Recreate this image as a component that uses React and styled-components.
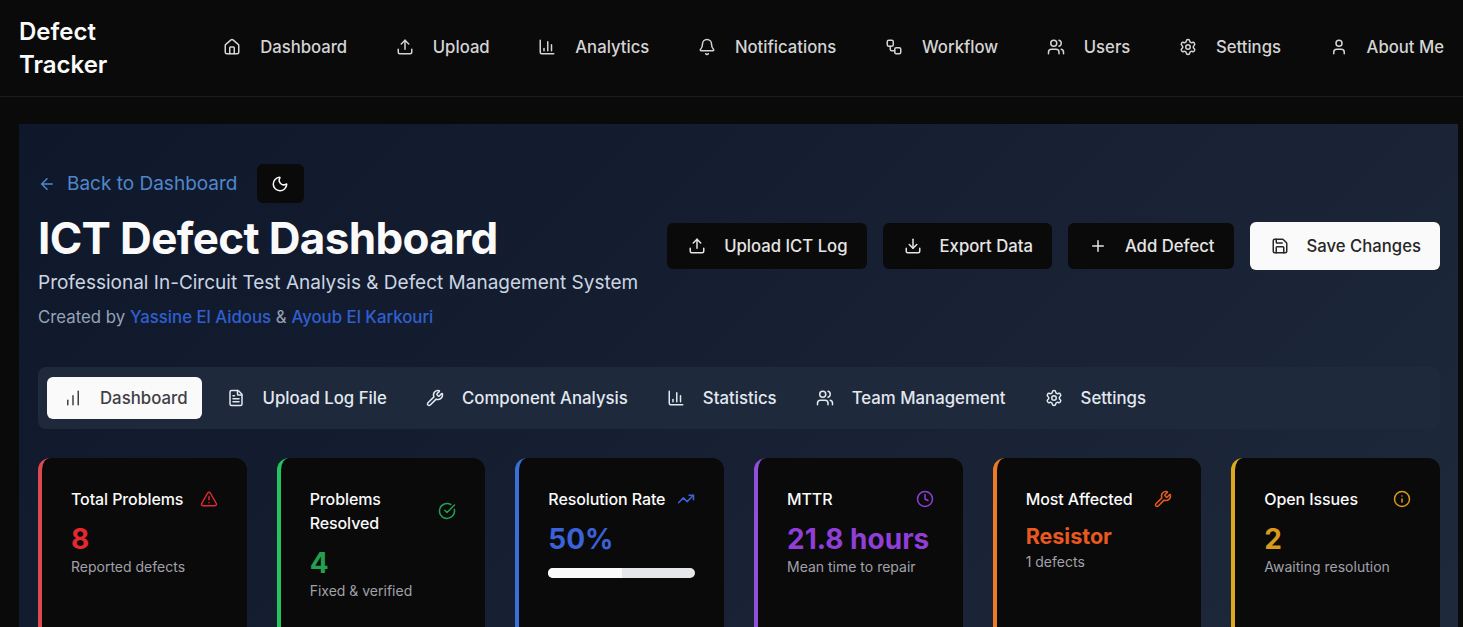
import styled, { createGlobalStyle } from "styled-components";
import {
  House, Upload, ChartColumn, Bell, Workflow, Users, Settings, User, ArrowLeft, Moon,
  Download, Plus, Save, ChartNoAxesColumnIncreasing, FileText, Wrench, TriangleAlert,
  CircleCheckBig, TrendingUp, Clock, Info,
} from "lucide-react";

const GlobalStyle = createGlobalStyle`
  html, body {
    margin: 0;
    height: 100%;
    overflow: hidden;
    background: #0a0a0a;
    font-family: Inter, "Liberation Sans", sans-serif;
  }
  * { box-sizing: border-box; }
`;

const TopBar = styled.header`
  height: 97px;
  padding: 0 19px;
  display: flex;
  align-items: center;
  justify-content: space-between;
  border-bottom: 1px solid #1c1c1c;
  background: #0a0a0a;
`;

const Logo = styled.div`
  width: 110px;
  font-size: 24px;
  line-height: 33px;
  font-weight: 600;
  color: #fafafa;
`;

const NavList = styled.nav`
  display: flex;
  align-items: center;
  gap: 48.6px;
  margin-bottom: 2px;
`;

const NavItem = styled.a`
  display: flex;
  align-items: center;
  gap: 19px;
  font-size: 16.7px;
  font-weight: 500;
  color: #d4d4d4;
`;

const Panel = styled.main`
  margin: 27px 5px 0 19px;
  height: 520px;
  padding: 40px 18px 0 19px;
  background: linear-gradient(135deg, #0f172a, #1e293b);
`;

const Header = styled.section`
  display: flex;
  align-items: center;
  justify-content: space-between;
`;

const BackRow = styled.div`
  display: flex;
  align-items: center;
  gap: 19px;
`;

const BackLink = styled.a`
  display: flex;
  align-items: center;
  gap: 11px;
  font-size: 19px;
  color: #5087cc;
`;

const ThemeButton = styled.button`
  width: 47px;
  height: 39px;
  border: 0;
  border-radius: 6px;
  background: #0a0a0a;
  color: #fafafa;
  display: flex;
  align-items: center;
  justify-content: center;
`;

const Title = styled.h1`
  margin: 8px 0 0;
  font-size: 44px;
  line-height: 54px;
  font-weight: 700;
  letter-spacing: -0.65px;
  color: #fafafa;
`;

const Subtitle = styled.p`
  margin: 4px 0 0;
  font-size: 19px;
  line-height: 28px;
  color: #cbd5e1;
`;

const Credit = styled.p`
  margin: 8px 0 0;
  font-size: 16.8px;
  line-height: 24px;
  color: #94a3b8;
`;

const Author = styled.span`
  font-weight: 500;
  color: #2f5fd0;
`;

const Actions = styled.div`
  display: flex;
  align-items: center;
  gap: 16px;
  margin-bottom: 2px;
`;

const ActionButton = styled.button`
  height: ${(props) => (props.$primary ? "48px" : "46px")};
  padding: 0 19px 0 21px;
  border: 0;
  border-radius: 6px;
  display: flex;
  align-items: center;
  gap: 18px;
  font-family: inherit;
  font-size: 16.7px;
  font-weight: 500;
  background: ${(props) => (props.$primary ? "#fafafa" : "#0a0a0a")};
  color: ${(props) => (props.$primary ? "#262626" : "#e5e5e5")};
`;

const TabBar = styled.div`
  margin-top: 38px;
  height: 62px;
  padding: 0 9px;
  display: flex;
  align-items: center;
  gap: 8px;
  border-radius: 8px;
  background: #1e293b;
`;

const Tab = styled.a`
  height: 42px;
  padding: 0 14px 0 17px;
  display: flex;
  align-items: center;
  gap: 18px;
  border-radius: 6px;
  font-size: 16.8px;
  font-weight: 500;
  background: ${(props) => (props.$active ? "#fafafa" : "transparent")};
  color: ${(props) => (props.$active ? "#3f3f46" : "#e2e8f0")};
`;

const CardGrid = styled.div`
  margin-top: 29px;
  display: grid;
  grid-template-columns: repeat(6, 1fr);
  gap: 30px;
`;

const Card = styled.article`
  height: 190px;
  padding: 29px 29px 0 29px;
  border-left: 4px solid ${(props) => props.$accent};
  border-radius: 12px;
  background: #0a0a0a;
`;

const CardHead = styled.div`
  display: flex;
  align-items: center;
  justify-content: space-between;
  gap: 8px;
  font-size: 16px;
  line-height: 24px;
  font-weight: 500;
  letter-spacing: -0.1px;
  color: #fafafa;
`;

const CardValue = styled.div`
  margin-top: 10px;
  font-size: ${(props) => (props.$small ? "21.5px" : "28px")};
  line-height: ${(props) => (props.$small ? "31px" : "36px")};
  font-weight: 700;
  white-space: nowrap;
  color: ${(props) => props.$color};
`;

const CardNote = styled.div`
  font-size: 14px;
  line-height: 20px;
  color: #a1a1aa;
`;

const Progress = styled.div`
  margin-top: 11px;
  height: 10px;
  border-radius: 5px;
  overflow: hidden;
  background: #e5e7eb;
`;

const ProgressFill = styled.div`
  height: 100%;
  background: #fafafa;
`;

const navItems = [
  [House, "Dashboard"], [Upload, "Upload"], [ChartColumn, "Analytics"], [Bell, "Notifications"],
  [Workflow, "Workflow"], [Users, "Users"], [Settings, "Settings"], [User, "About Me"],
];

const tabs = [
  [ChartNoAxesColumnIncreasing, "Dashboard"], [FileText, "Upload Log File"], [Wrench, "Component Analysis"],
  [ChartColumn, "Statistics"], [Users, "Team Management"], [Settings, "Settings"],
];

const cards = [
  { title: "Total Problems", Icon: TriangleAlert, accent: "#dc4a4f", color: "#e5282f", value: "8", note: "Reported defects" },
  { title: "Problems Resolved", Icon: CircleCheckBig, accent: "#22c55e", color: "#22a04f", value: "4", note: "Fixed & verified" },
  { title: "Resolution Rate", Icon: TrendingUp, accent: "#3b6fd8", color: "#3b62d8", value: "50%", progress: 50 },
  { title: "MTTR", Icon: Clock, accent: "#9050dc", color: "#8f3fd6", value: "21.8 hours", note: "Mean time to repair" },
  { title: "Most Affected", Icon: Wrench, accent: "#f07a24", color: "#e8591f", value: "Resistor", note: "1 defects", small: true },
  { title: "Open Issues", Icon: Info, accent: "#e0a81e", color: "#d99a1c", value: "2", note: "Awaiting resolution" },
];

export default function App() {
  return (
    <>
      <GlobalStyle />
      <TopBar>
        <Logo>Defect Tracker</Logo>
        <NavList>
          {navItems.map(([Icon, label]) => (
            <NavItem key={label}><Icon size={18} />{label}</NavItem>
          ))}
        </NavList>
      </TopBar>
      <Panel>
        <Header>
          <div>
            <BackRow>
              <BackLink><ArrowLeft size={18} />Back to Dashboard</BackLink>
              <ThemeButton><Moon size={18} /></ThemeButton>
            </BackRow>
            <Title>ICT Defect Dashboard</Title>
            <Subtitle>Professional In-Circuit Test Analysis &amp; Defect Management System</Subtitle>
            <Credit>Created by <Author>Yassine El Aidous</Author> &amp; <Author>Ayoub El Karkouri</Author></Credit>
          </div>
          <Actions>
            <ActionButton><Upload size={18} />Upload ICT Log</ActionButton>
            <ActionButton><Download size={18} />Export Data</ActionButton>
            <ActionButton><Plus size={18} />Add Defect</ActionButton>
            <ActionButton $primary><Save size={18} />Save Changes</ActionButton>
          </Actions>
        </Header>
        <TabBar>
          {tabs.map(([Icon, label], i) => (
            <Tab key={label} $active={i === 0}><Icon size={18} />{label}</Tab>
          ))}
        </TabBar>
        <CardGrid>
          {cards.map(({ title, Icon, accent, color, value, note, small, progress }) => (
            <Card key={title} $accent={accent}>
              <CardHead>{title}<Icon size={18} color={color} style={{ flexShrink: 0 }} /></CardHead>
              <CardValue $color={color} $small={small}>{value}</CardValue>
              {note && <CardNote>{note}</CardNote>}
              {progress && <Progress><ProgressFill style={{ width: `${progress}%` }} /></Progress>}
            </Card>
          ))}
        </CardGrid>
      </Panel>
    </>
  );
}
